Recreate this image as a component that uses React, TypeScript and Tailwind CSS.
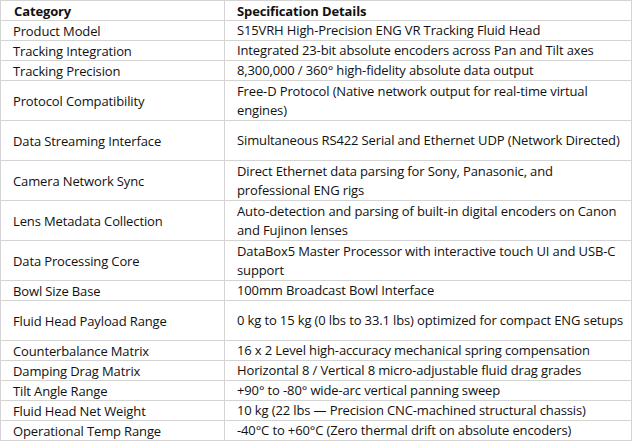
import React from "react";

type Row = { label: string; lines: string[]; tall?: boolean };

const rows: Row[] = [
  { label: "Product Model", lines: ["S15VRH High-Precision ENG VR Tracking Fluid Head"] },
  { label: "Tracking Integration", lines: ["Integrated 23-bit absolute encoders across Pan and Tilt axes"] },
  { label: "Tracking Precision", lines: ["8,300,000 / 360° high-fidelity absolute data output"] },
  {
    label: "Protocol Compatibility",
    lines: ["Free-D Protocol (Native network output for real-time virtual", "engines)"],
  },
  {
    label: "Data Streaming Interface",
    lines: ["Simultaneous RS422 Serial and Ethernet UDP (Network Directed)"],
    tall: true,
  },
  {
    label: "Camera Network Sync",
    lines: ["Direct Ethernet data parsing for Sony, Panasonic, and", "professional ENG rigs"],
  },
  {
    label: "Lens Metadata Collection",
    lines: ["Auto-detection and parsing of built-in digital encoders on Canon", "and Fujinon lenses"],
  },
  {
    label: "Data Processing Core",
    lines: ["DataBox5 Master Processor with interactive touch UI and USB-C", "support"],
  },
  { label: "Bowl Size Base", lines: ["100mm Broadcast Bowl Interface"] },
  {
    label: "Fluid Head Payload Range",
    lines: ["0 kg to 15 kg (0 lbs to 33.1 lbs) optimized for compact ENG setups"],
    tall: true,
  },
  { label: "Counterbalance Matrix", lines: ["16 x 2 Level high-accuracy mechanical spring compensation"] },
  { label: "Damping Drag Matrix", lines: ["Horizontal 8 / Vertical 8 micro-adjustable fluid drag grades"] },
  { label: "Tilt Angle Range", lines: ["+90° to -80° wide-arc vertical panning sweep"] },
  { label: "Fluid Head Net Weight", lines: ["10 kg (22 lbs — Precision CNC-machined structural chassis)"] },
  { label: "Operational Temp Range", lines: ["-40°C to +60°C (Zero thermal drift on absolute encoders)"] },
];

export default function App() {
  return (
    <div className="bg-white w-[632px] h-[441px] font-['Open_Sans',sans-serif] text-[13px] tracking-[-0.13px] text-[#111]">
      <table className="border-collapse table-fixed w-[631px]">
        <colgroup>
          <col className="w-[224px]" />
          <col className="w-[407px]" />
        </colgroup>
        <thead>
          <tr className="h-[20px]">
            <th className="border border-[#d4d4d4] pl-[13px] pr-2 py-0 text-left font-bold leading-[18px] align-middle">
              Category
            </th>
            <th className="border border-[#d4d4d4] pl-[12px] pr-1 py-0 text-left font-bold leading-[18px] align-middle">
              Specification Details
            </th>
          </tr>
        </thead>
        <tbody>
          {rows.map((r) => {
            const h = r.lines.length > 1 || r.tall ? "h-[40px]" : "h-[20px]";
            return (
              <tr key={r.label} className={h}>
                <td className="border border-[#d4d4d4] pl-[12px] pr-2 py-0 align-middle leading-[18px] whitespace-nowrap">
                  {r.label}
                </td>
                <td className="border border-[#d4d4d4] pl-[12px] pr-0 py-0 align-middle leading-[19px] whitespace-nowrap">
                  {r.lines.map((l, i) => (
                    <div key={i}>{l}</div>
                  ))}
                </td>
              </tr>
            );
          })}
        </tbody>
      </table>
    </div>
  );
}
